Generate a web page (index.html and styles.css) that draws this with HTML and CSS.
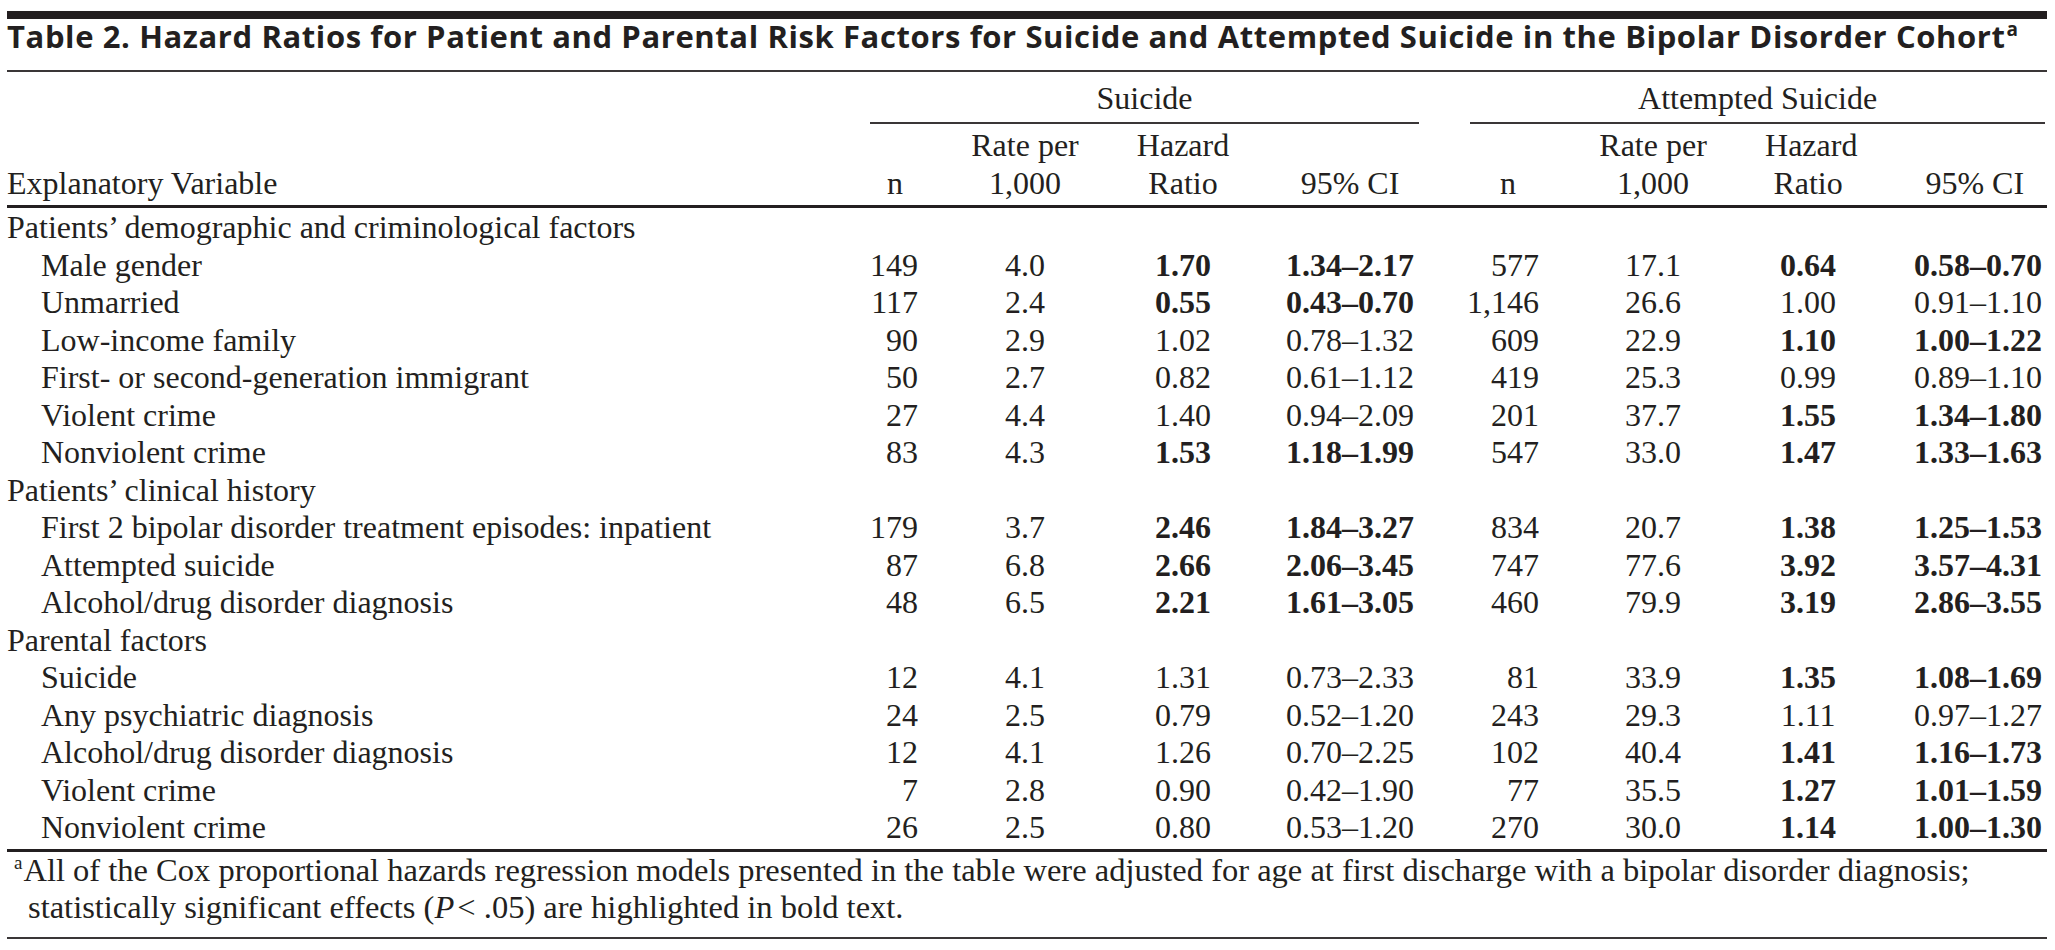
FILE: index.html
```html
<!DOCTYPE html>
<html lang="en">
<head>
<meta charset="utf-8">
<title>Table 2</title>
<link rel="stylesheet" href="styles.css">
</head>
<body>
<div class="page">
  <div class="topbar"></div>
  <h1 class="title">Table 2. Hazard Ratios for Patient and Parental Risk Factors for Suicide and Attempted Suicide in the Bipolar Disorder Cohort<sup class="title-sup">a</sup></h1>
  <table class="data">
    <colgroup>
      <col class="c-label">
      <col class="c-sn">
      <col class="c-srate">
      <col class="c-shr">
      <col class="c-sci">
      <col class="c-an">
      <col class="c-arate">
      <col class="c-ahr">
      <col class="c-aci">
    </colgroup>
    <thead>
      <tr class="group-row">
        <th></th>
        <th colspan="4"><div class="group group-s">Suicide</div></th>
        <th colspan="4"><div class="group group-a">Attempted Suicide</div></th>
      </tr>
      <tr class="head-row">
        <th class="h-label">Explanatory Variable</th>
        <th class="h-n h-sn">n</th>
        <th>Rate per<br>1,000</th>
        <th>Hazard<br>Ratio</th>
        <th>95% CI</th>
        <th class="h-n h-an">n</th>
        <th>Rate per<br>1,000</th>
        <th>Hazard<br>Ratio</th>
        <th class="h-aci">95% CI</th>
      </tr>
    </thead>
    <tbody>
      <tr class="cat"><td colspan="9">Patients’ demographic and criminological factors</td></tr>
      <tr><td class="lbl">Male gender</td><td class="n">149</td><td>4.0</td><td class="b">1.70</td><td class="b">1.34–2.17</td><td class="n">577</td><td>17.1</td><td class="b">0.64</td><td class="b aci">0.58–0.70</td></tr>
      <tr><td class="lbl">Unmarried</td><td class="n">117</td><td>2.4</td><td class="b">0.55</td><td class="b">0.43–0.70</td><td class="n">1,146</td><td>26.6</td><td>1.00</td><td class="aci">0.91–1.10</td></tr>
      <tr><td class="lbl">Low-income family</td><td class="n">90</td><td>2.9</td><td>1.02</td><td>0.78–1.32</td><td class="n">609</td><td>22.9</td><td class="b">1.10</td><td class="b aci">1.00–1.22</td></tr>
      <tr><td class="lbl">First- or second-generation immigrant</td><td class="n">50</td><td>2.7</td><td>0.82</td><td>0.61–1.12</td><td class="n">419</td><td>25.3</td><td>0.99</td><td class="aci">0.89–1.10</td></tr>
      <tr><td class="lbl">Violent crime</td><td class="n">27</td><td>4.4</td><td>1.40</td><td>0.94–2.09</td><td class="n">201</td><td>37.7</td><td class="b">1.55</td><td class="b aci">1.34–1.80</td></tr>
      <tr><td class="lbl">Nonviolent crime</td><td class="n">83</td><td>4.3</td><td class="b">1.53</td><td class="b">1.18–1.99</td><td class="n">547</td><td>33.0</td><td class="b">1.47</td><td class="b aci">1.33–1.63</td></tr>
      <tr class="cat"><td colspan="9">Patients’ clinical history</td></tr>
      <tr><td class="lbl">First 2 bipolar disorder treatment episodes: inpatient</td><td class="n">179</td><td>3.7</td><td class="b">2.46</td><td class="b">1.84–3.27</td><td class="n">834</td><td>20.7</td><td class="b">1.38</td><td class="b aci">1.25–1.53</td></tr>
      <tr><td class="lbl">Attempted suicide</td><td class="n">87</td><td>6.8</td><td class="b">2.66</td><td class="b">2.06–3.45</td><td class="n">747</td><td>77.6</td><td class="b">3.92</td><td class="b aci">3.57–4.31</td></tr>
      <tr><td class="lbl">Alcohol/drug disorder diagnosis</td><td class="n">48</td><td>6.5</td><td class="b">2.21</td><td class="b">1.61–3.05</td><td class="n">460</td><td>79.9</td><td class="b">3.19</td><td class="b aci">2.86–3.55</td></tr>
      <tr class="cat"><td colspan="9">Parental factors</td></tr>
      <tr><td class="lbl">Suicide</td><td class="n">12</td><td>4.1</td><td>1.31</td><td>0.73–2.33</td><td class="n">81</td><td>33.9</td><td class="b">1.35</td><td class="b aci">1.08–1.69</td></tr>
      <tr><td class="lbl">Any psychiatric diagnosis</td><td class="n">24</td><td>2.5</td><td>0.79</td><td>0.52–1.20</td><td class="n">243</td><td>29.3</td><td>1.11</td><td class="aci">0.97–1.27</td></tr>
      <tr><td class="lbl">Alcohol/drug disorder diagnosis</td><td class="n">12</td><td>4.1</td><td>1.26</td><td>0.70–2.25</td><td class="n">102</td><td>40.4</td><td class="b">1.41</td><td class="b aci">1.16–1.73</td></tr>
      <tr><td class="lbl">Violent crime</td><td class="n">7</td><td>2.8</td><td>0.90</td><td>0.42–1.90</td><td class="n">77</td><td>35.5</td><td class="b">1.27</td><td class="b aci">1.01–1.59</td></tr>
      <tr class="last"><td class="lbl">Nonviolent crime</td><td class="n">26</td><td>2.5</td><td>0.80</td><td>0.53–1.20</td><td class="n">270</td><td>30.0</td><td class="b">1.14</td><td class="b aci">1.00–1.30</td></tr>
    </tbody>
  </table>
  <div class="footnote">
    <p><sup class="fn-sup">a</sup><span>All of the Cox proportional hazards regression models presented in the table were adjusted for age at first discharge with a bipolar disorder diagnosis;</span><br><span>statistically significant effects (</span><i class="pval">P</i><span>&lt; .05) are highlighted in bold text.</span></p>
  </div>
</div>
</body>
</html>
```
FILE: styles.css
```css
html, body {
  margin: 0;
  padding: 0;
  background: #ffffff;
}

.page {
  width: 2040px;
  margin-left: 7px;
  padding-top: 11px;
  color: #231f20;
  font-family: "Liberation Serif", "Times New Roman", serif;
}

.topbar {
  height: 8px;
  background: #231f20;
}

.title {
  margin: 0;
  padding-top: 0;
  padding-bottom: 17px;
  border-bottom: 2px solid #3a3637;
  font-family: "Open Sans", "Liberation Sans", sans-serif;
  font-weight: 700;
  font-size: 31px;
  line-height: 34px;
  letter-spacing: 0.6px;
  white-space: nowrap;
}

.title-sup {
  font-size: 19px;
  line-height: 0;
  vertical-align: 12px;
  margin-left: 1px;
}

.data {
  width: 2040px;
  table-layout: fixed;
  border-collapse: collapse;
  font-size: 32px;
  line-height: 37.5px;
}

.c-label { width: 863px; }
.c-sn    { width: 50px; }
.c-srate { width: 210px; }
.c-shr   { width: 106px; }
.c-sci   { width: 228px; }
.c-an    { width: 77px; }
.c-arate { width: 224px; }
.c-ahr   { width: 86px; }
.c-aci   { width: 196px; }

.data th,
.data td {
  padding: 0;
  font-weight: normal;
  text-align: center;
  vertical-align: bottom;
  white-space: nowrap;
}

.group-row th {
  padding-top: 8px;
}

.group {
  padding-bottom: 4.5px;
  border-bottom: 2.5px solid #3a3637;
}

.group-s { margin-right: 45px; }
.group-a { margin-left: 6px; margin-right: 2px; }

.head-row th {
  padding-top: 3px;
  padding-bottom: 2.5px;
  border-bottom: 3px solid #231f20;
}

.data .h-label { text-align: left; }

.data .h-n { text-align: right; }
.data .h-sn { padding-right: 17px; }
.data .h-an { padding-right: 25px; }
.data .h-aci { text-align: right; padding-right: 23px; }

.data tbody tr:first-child td { padding-top: 1.5px; }

.data td.lbl,
.data tr.cat td {
  text-align: left;
}

.data td.lbl { padding-left: 34px; }

.data td.n {
  text-align: right;
  padding-right: 2px;
}

.data td.aci {
  text-align: right;
  padding-right: 5px;
}

.data td.b { font-weight: bold; }

.data tr.last td {
  padding-bottom: 2px;
  border-bottom: 3px solid #231f20;
}

.footnote {
  padding-bottom: 11px;
  border-bottom: 2.5px solid #3a3637;
}

.footnote p {
  margin: 0;
  padding-left: 21px;
  text-indent: -14px;
  padding-right: 0;
  font-size: 32.5px;
  line-height: 37px;
  white-space: nowrap;
}

.pval {
  margin-right: 3px;
}

.fn-sup {
  font-size: 19px;
  line-height: 0;
  vertical-align: 12px;
  margin-right: 1px;
}
```
